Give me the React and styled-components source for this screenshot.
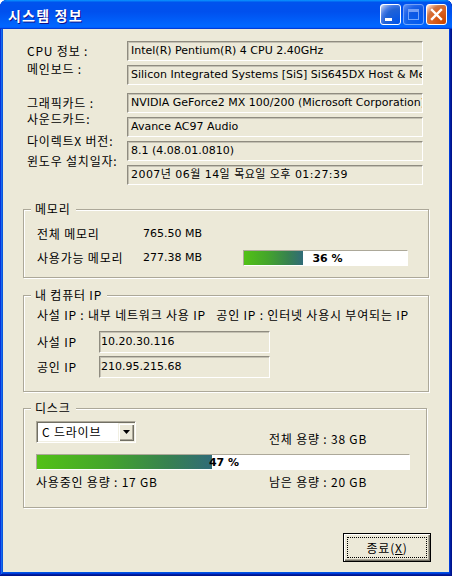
import React from 'react'
import styled, { createGlobalStyle } from 'styled-components'

const KR = '"Noto Sans CJK KR", sans-serif'
const TAHOMA = '"DejaVu Sans", "Noto Sans CJK KR", sans-serif'

const GlobalStyle = createGlobalStyle`
  html, body {
    margin: 0;
    padding: 0;
    background: #fff;
  }
  body {
    font-family: ${KR};
    font-size: 12px;
    letter-spacing: 0.8px;
    color: #000;
  }
  * {
    box-sizing: border-box;
  }
`

const Window = styled.div`
  width: 452px;
  height: 576px;
  display: flex;
  flex-direction: column;
  background: #0054e3;
  border-radius: 7px 7px 0 0;
  overflow: hidden;
  box-shadow: inset -1px -1px #00138c, inset 1px 1px #0831d9, inset -2px -2px #001ea0,
    inset 2px 2px #166aee, inset -3px -3px #003bda, inset 3px 3px #0855dd;
`

const TitleBar = styled.div`
  height: 29px;
  flex-shrink: 0;
  display: flex;
  align-items: center;
  padding: 0 5px 0 8px;
  background: linear-gradient(180deg, #0997ff, #0053ee 8%, #0050ee 40%, #0066ff 88%, #0066ff 93%, #005bff 95%, #003dd7 96%, #003dd7);
`

const Title = styled.div`
  flex: 1;
  color: #fff;
  font-family: ${KR};
  font-weight: bold;
  font-size: 14px;
  letter-spacing: 1.2px;
  line-height: 16px;
  text-shadow: 1px 1px #0f1089;
`

const CtrlButton = styled.div`
  width: 21px;
  height: 21px;
  margin-left: 2px;
  border: 1px solid #fff;
  border-radius: 3px;
  display: flex;
  align-items: center;
  justify-content: center;
  background: ${(p) =>
    p.$close
      ? 'radial-gradient(circle at 90% 90%, #cc4600 0%, #dc6527 55%, #cd7546 70%, #ffccb2 90%, #fff 100%)'
      : 'radial-gradient(circle at 90% 90%, #0054e9 0%, #2263d5 55%, #4479e4 70%, #a3bbec 90%, #fff 100%)'};
  opacity: ${(p) => (p.$disabled ? 0.45 : 1)};
`

const Client = styled.div`
  flex: 1;
  margin: 0 3px 4px;
  background: #ece9d8;
  display: flex;
  flex-direction: column;
  padding-top: 12px;
`

const InfoList = styled.div`
  display: flex;
  flex-direction: column;
  gap: 4px;
  margin: 0 26px 0 24px;
`

const InfoRow = styled.div`
  display: flex;
  align-items: flex-start;
  margin-top: ${(p) => (p.$spaced ? '4px' : '0')};
`

const InfoLabel = styled.div`
  width: 100px;
  flex-shrink: 0;
  line-height: 20px;
  white-space: nowrap;
  margin-top: ${(p) => p.$shift || 0}px;
`

const Field = styled.div`
  flex: ${(p) => (p.$w ? 'none' : '1')};
  width: ${(p) => (p.$w ? `${p.$w}px` : 'auto')};
  height: ${(p) => p.$h || 20}px;
  line-height: ${(p) => (p.$h || 20) - 2}px;
  padding: 0 ${(p) => (p.$pad == null ? 3 : p.$pad)}px;
  border: 1px solid;
  border-color: #8f8c80 #fff #fff #8f8c80;
  box-shadow: inset 1px 1px #c4c1b3;
  font-family: ${TAHOMA};
  font-size: 11px;
  letter-spacing: ${(p) => p.$spacing || 0}px;
  white-space: nowrap;
  overflow: hidden;
`

const Group = styled.section`
  position: relative;
  margin: ${(p) => p.$top}px ${(p) => p.$right || 20}px 0 20px;
  border: 1px solid #aca899;
  box-shadow: inset 1px 1px #fff, 1px 1px #fff;
  padding: ${(p) => p.$pad};
`

const Legend = styled.span`
  position: absolute;
  top: -9px;
  left: 7px;
  padding: 0 5px 0 4px;
  background: #ece9d8;
  line-height: 16px;
  white-space: nowrap;
`

const StatGrid = styled.div`
  display: grid;
  grid-template-columns: 106px 100px 166px;
  grid-auto-rows: 20px;
  row-gap: 4px;
  align-items: center;
`

const Text = styled.span`
  line-height: 20px;
  white-space: ${(p) => (p.$pre ? 'pre' : 'nowrap')};
  font-family: ${(p) => (p.$latin ? TAHOMA : KR)};
  font-size: ${(p) => (p.$latin ? '11px' : '12px')};
  letter-spacing: ${(p) => (p.$latin ? '0' : '0.8px')};
`

const Progress = styled.div`
  position: relative;
  width: ${(p) => p.$w}px;
  height: 16px;
  background: #fff;
  border: 1px solid;
  border-color: #aca899 #fff #fff #aca899;
`

const ProgressFill = styled.div`
  height: 100%;
  background: linear-gradient(to right, #52c116 0%, #44a52c 40%, #378150 75%, #306b78 100%);
`

const ProgressText = styled.span`
  position: absolute;
  inset: 0;
  display: flex;
  align-items: center;
  justify-content: center;
  font-family: ${TAHOMA};
  font-weight: bold;
  font-size: 11px;
  letter-spacing: 0;
  padding-left: ${(p) => p.$nudge || 0}px;
`

const IpRow = styled.div`
  display: flex;
  align-items: center;
  margin-top: ${(p) => p.$gap}px;
`

const IpLabel = styled.span`
  width: 62px;
  line-height: 20px;
`

const DiskGrid = styled.div`
  display: grid;
  grid-template-columns: 233px 1fr;
  grid-template-rows: 28px auto auto;
`

const Combo = styled.div`
  align-self: start;
  width: 100px;
  height: 22px;
  display: flex;
  align-items: stretch;
  background: #fff;
  border: 1px solid;
  border-color: #aca899 #fff #fff #aca899;
  box-shadow: inset 1px 1px #716f64, inset -1px -1px #f1efe2;
  padding: 1px;
`

const ComboText = styled.span`
  flex: 1;
  padding-left: 4px;
  line-height: 18px;
`

const DropButton = styled.div`
  width: 16px;
  display: flex;
  align-items: center;
  justify-content: center;
  background: #ece9d8;
  box-shadow: inset 1px 1px #f1efe2, inset 2px 2px #fff, inset -1px -1px #716f64, inset -2px -2px #aca899;
`

const BarCell = styled.div`
  grid-column: 1 / 3;
  margin-top: 5px;
`

const BottomText = styled(Text)`
  margin-top: 2px;
`

const TotalText = styled(Text)`
  align-self: end;
`

const Footer = styled.div`
  display: flex;
  justify-content: flex-end;
  margin-top: 25px;
  padding-right: 18px;
`

const CloseButton = styled.button`
  position: relative;
  width: 88px;
  height: 29px;
  padding: 0;
  border: 1px solid #000;
  background: #ece9d8;
  box-shadow: inset 1px 1px #fff, inset -1px -1px #716f64, inset -2px -2px #aca899;
  font-family: ${KR};
  font-size: 12px;
  letter-spacing: 0.8px;
  color: #000;
  &::after {
    content: '';
    position: absolute;
    inset: 3px;
    border: 1px dotted #000;
  }
`

const infoRows = [
  { label: 'CPU 정보 :', value: 'Intel(R) Pentium(R) 4 CPU 2.40GHz', shift: 0 },
  { label: '메인보드 :', value: 'Silicon Integrated Systems [SiS] SiS645DX Host & Memory & AGP Controller', shift: -6 },
  { label: '그래픽카드 :', value: 'NVIDIA GeForce2 MX 100/200 (Microsoft Corporation)', shift: 0, spaced: true },
  { label: '사운드카드:', value: 'Avance AC97 Audio', shift: -8 },
  { label: '다이렉트X 버전:', value: '8.1 (4.08.01.0810)', shift: -10 },
  { label: '윈도우 설치일자:', value: '2007년 06월 14일 목요일 오후 01:27:39', shift: -14, spacing: 0.45 },
]

const MinimizeIcon = () => (
  <svg width="19" height="19" viewBox="0 0 19 19">
    <rect x="4" y="13" width="7" height="3" fill="#fff" />
  </svg>
)

const MaximizeIcon = () => (
  <svg width="19" height="19" viewBox="0 0 19 19">
    <rect x="4.5" y="4.5" width="10" height="10" fill="none" stroke="#fff" />
    <rect x="4" y="4" width="11" height="3" fill="#fff" />
  </svg>
)

const CloseIcon = () => (
  <svg width="19" height="19" viewBox="0 0 19 19">
    <path d="M5 5 L14 14 M14 5 L5 14" stroke="#fff" strokeWidth="2.4" strokeLinecap="square" />
  </svg>
)

const Arrow = () => (
  <svg width="7" height="4" viewBox="0 0 7 4">
    <path d="M0 0 H7 L3.5 4 Z" fill="#000" />
  </svg>
)

const ProgressBar = ({ width, percent, nudge }) => (
  <Progress $w={width}>
    <ProgressFill style={{ width: `${percent}%` }} />
    <ProgressText $nudge={nudge}>{percent} %</ProgressText>
  </Progress>
)

export default function App() {
  return (
    <>
      <GlobalStyle />
      <Window>
        <TitleBar>
          <Title>시스템 정보</Title>
          <CtrlButton><MinimizeIcon /></CtrlButton>
          <CtrlButton $disabled><MaximizeIcon /></CtrlButton>
          <CtrlButton $close><CloseIcon /></CtrlButton>
        </TitleBar>
        <Client>
          <InfoList>
            {infoRows.map((row) => (
              <InfoRow key={row.label} $spaced={row.spaced}>
                <InfoLabel $shift={row.shift}>{row.label}</InfoLabel>
                <Field $spacing={row.spacing}>{row.value}</Field>
              </InfoRow>
            ))}
          </InfoList>

          <Group $top={24} $pad="14px 0 9px 13px">
            <Legend>메모리</Legend>
            <StatGrid>
              <Text>전체 메모리</Text>
              <Text $latin>765.50 MB</Text>
              <span />
              <Text>사용가능 메모리</Text>
              <Text $latin>277.38 MB</Text>
              <ProgressBar width={165} percent={36} nudge={4} />
            </StatGrid>
          </Group>

          <Group $top={17} $pad="9px 0 13px 13px">
            <Legend>내 컴퓨터 IP</Legend>
            <Text $pre>사설 IP : 내부 네트워크 사용 IP   공인 IP : 인터넷 사용시 부여되는 IP</Text>
            <IpRow $gap={6}>
              <IpLabel>사설 IP</IpLabel>
              <Field $w={171} $h={22} $pad={1}>10.20.30.116</Field>
            </IpRow>
            <IpRow $gap={3}>
              <IpLabel>공인 IP</IpLabel>
              <Field $w={171} $h={22} $pad={1}>210.95.215.68</Field>
            </IpRow>
          </Group>

          <Group $top={16} $right={22} $pad="12px 16px 15px 12px">
            <Legend>디스크</Legend>
            <DiskGrid>
              <Combo>
                <ComboText>C 드라이브</ComboText>
                <DropButton><Arrow /></DropButton>
              </Combo>
              <TotalText>전체 용량 : 38 GB</TotalText>
              <BarCell>
                <ProgressBar width={374} percent={47} nudge={2} />
              </BarCell>
              <BottomText>사용중인 용량 : 17 GB</BottomText>
              <BottomText>남은 용량 : 20 GB</BottomText>
            </DiskGrid>
          </Group>

          <Footer>
            <CloseButton>종료(<u>X</u>)</CloseButton>
          </Footer>
        </Client>
      </Window>
    </>
  )
}
